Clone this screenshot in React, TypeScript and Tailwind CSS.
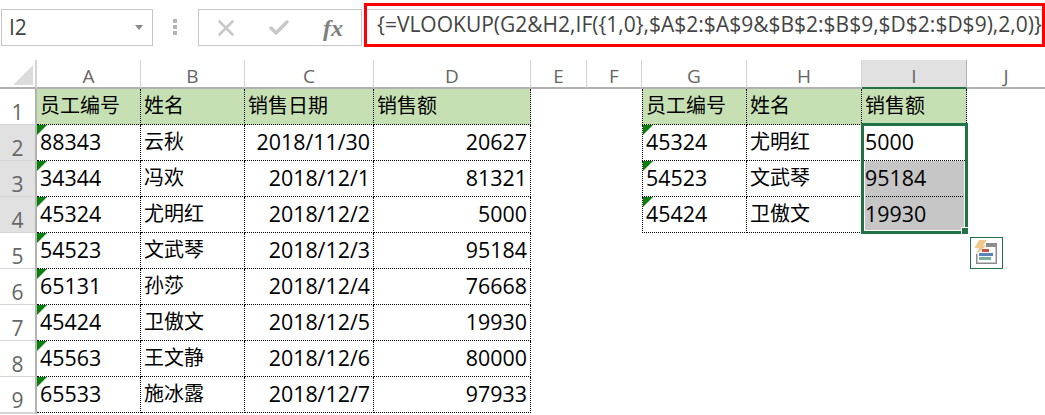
import { Check, X } from "lucide-react";

const font = "font-['Open_Sans','Noto_Sans_CJK_SC',sans-serif]";

const colLetters = ["A", "B", "C", "D", "E", "F", "G", "H", "I", "J"];

const leftRows = [
  ["88343", "云秋", "2018/11/30", "20627"],
  ["34344", "冯欢", "2018/12/1", "81321"],
  ["45324", "尤明红", "2018/12/2", "5000"],
  ["54523", "文武琴", "2018/12/3", "95184"],
  ["65131", "孙莎", "2018/12/4", "76668"],
  ["45424", "卫傲文", "2018/12/5", "19930"],
  ["45563", "王文静", "2018/12/6", "80000"],
  ["65533", "施冰露", "2018/12/7", "97933"],
];

const rightRows = [
  ["45324", "尤明红", "5000"],
  ["54523", "文武琴", "95184"],
  ["45424", "卫傲文", "19930"],
];

function ErrorMark() {
  return (
    <span className="absolute left-0 top-0 h-0 w-0 border-r-[10px] border-t-[10px] border-r-transparent border-t-[#0b7f0b]" />
  );
}

function TableCell({
  text,
  right,
  mark,
  header,
  first,
  gray,
  cjk,
}: {
  text: string;
  right?: boolean;
  mark?: boolean;
  header?: boolean;
  first?: boolean;
  gray?: boolean;
  cjk?: boolean;
}) {
  return (
    <div
      className={`relative flex items-center overflow-hidden whitespace-nowrap border-b border-r border-dotted border-black px-[3px] pb-[2px] leading-none text-black ${
        cjk ? "text-[20px]" : "text-[21.4px]"
      } ${right ? "justify-end" : "justify-start"} ${header ? "bg-[#c6e0b4]" : ""} ${
        first ? "border-l" : ""
      } ${gray ? "bg-[#c6c6c6]" : ""}`}
    >
      {mark && <ErrorMark />}
      <span>{text}</span>
    </div>
  );
}

function RowHead({ n }: { n?: number }) {
  const active = n !== undefined && n >= 2 && n <= 4;
  return (
    <div
      className={`flex items-end justify-center border-b border-r-2 border-b-[#d4d4d4] border-r-[#b1b1b1] text-[21px] leading-[24px] text-[#666666] ${
        active ? "bg-[#e1e1e1]" : ""
      }`}
    >
      {n}
    </div>
  );
}

function Empty() {
  return <div />;
}

export default function App() {
  return (
    <div className={`relative h-[415px] w-[1045px] overflow-hidden bg-white ${font}`}>
      {/* formula bar */}
      <div className="flex h-[60px] items-start bg-white">
        <div className="ml-px mt-[9px] flex h-[37px] w-[152px] items-center justify-between border border-[#c6c6c6] pl-[7px] pr-[9px] text-[21px] text-[#444444]">
          <span>I2</span>
          <span className="h-0 w-0 border-x-[4px] border-t-[5px] border-x-transparent border-t-[#8a8a8a]" />
        </div>
        <div className="ml-[20px] mt-[19px] flex flex-col gap-[2px]">
          <span className="h-[4px] w-[4px] bg-[#b4b4b4]" />
          <span className="h-[4px] w-[4px] bg-[#b4b4b4]" />
          <span className="h-[4px] w-[4px] bg-[#b4b4b4]" />
        </div>
        <div className="ml-[21px] mt-[9px] flex h-[37px] w-[164px] items-center border border-[#c6c6c6]">
          <X className="ml-[14px] h-[26px] w-[26px] text-[#c8c8c8]" strokeWidth={2.5} />
          <Check className="ml-[28px] h-[24px] w-[24px] text-[#c8c8c8]" strokeWidth={3.5} />
          <span className="ml-[32px] font-['Liberation_Serif',serif] text-[24px] font-bold italic leading-none text-[#808080]">
            fx
          </span>
        </div>
        <div className="ml-[2px] mt-[3px] h-[44px] w-[681px] border-[3px] border-[#ff0000] bg-white">
          <div className="mt-[3px] flex h-[31px] items-center whitespace-nowrap border-t border-[#d0d0d0] pb-[2px] pl-[10px] text-[21px] leading-none text-[#444444]">
            {"{=VLOOKUP(G2&H2,IF({1,0},$A$2:$A$9&$B$2:$B$9,$D$2:$D$9),2,0)}"}
          </div>
        </div>
      </div>

      {/* sheet */}
      <div className="grid grid-cols-[37px_104px_104px_129px_157px_56px_55px_105px_115px_105px_78px] grid-rows-[29px_repeat(8,36px)_36px]">
        <div className="relative border-b-2 border-r-2 border-[#b1b1b1] border-r-[#d4d4d4]">
          <span className="absolute bottom-[2px] right-[2px] h-0 w-0 border-b-[20px] border-l-[20px] border-b-[#dcdcdc] border-l-transparent" />
        </div>
        {colLetters.map((c) => (
          <div
            key={c}
            className={`flex items-end justify-center border-b-2 pb-px text-[19px] leading-[20px] text-[#666666] ${
              c === "I"
                ? "border-b-[#217346] border-r border-r-[#b1b1b1] bg-[#e1e1e1]"
                : c === "J"
                  ? "border-b-[#b1b1b1]"
                  : "border-b-[#b1b1b1] border-r border-r-[#d4d4d4]"
            }`}
          >
            {c}
          </div>
        ))}

        <RowHead n={1} />
        <TableCell text="员工编号" header cjk />
        <TableCell text="姓名" header cjk />
        <TableCell text="销售日期" header cjk />
        <TableCell text="销售额" header cjk />
        <Empty />
        <Empty />
        <TableCell text="员工编号" header first cjk />
        <TableCell text="姓名" header cjk />
        <TableCell text="销售额" header cjk />
        <Empty />

        {leftRows.map((row, i) => {
          const r = rightRows[i];
          return (
            <div key={row[0]} className="contents">
              <RowHead n={i + 2} />
              <TableCell text={row[0]} mark />
              <TableCell text={row[1]} cjk />
              <TableCell text={row[2]} right />
              <TableCell text={row[3]} right />
              <Empty />
              <Empty />
              {r ? (
                <>
                  <TableCell text={r[0]} mark first />
                  <TableCell text={r[1]} cjk />
                  <TableCell text={r[2]} gray={i > 0} />
                </>
              ) : (
                <>
                  <Empty />
                  <Empty />
                  <Empty />
                </>
              )}
              <Empty />
            </div>
          );
        })}
        <RowHead />
      </div>

      {/* selection over I2:I4 */}
      <div className="pointer-events-none absolute left-[861px] top-[123px] h-[111px] w-[107px] border-[3px] border-[#217346]">
        <div className="absolute inset-0 top-[35px] border-x border-b border-white" />
        <span className="absolute -bottom-[4px] -right-[4px] h-[8px] w-[8px] border border-white bg-[#217346]" />
      </div>

      {/* quick analysis button */}
      <div className="absolute left-[970px] top-[237px] h-[32px] w-[33px] border border-[#217346] bg-white">
        <svg width="31" height="30" viewBox="0 0 31 30" className="block">
          <path d="M5.75 16V25.25H25.25V8" fill="none" stroke="#8c8c8c" strokeWidth="1.5" />
          <rect x="15" y="5" width="11" height="4" fill="#8c8c8c" />
          <rect x="11" y="11" width="7" height="3" fill="#c9553f" />
          <rect x="8" y="15" width="14" height="3" fill="#5b84bd" />
          <rect x="8" y="19" width="12" height="3" fill="#76b29b" />
          <path d="M8 2H16L12 7.5H15.5L5 16.5L8 10H3.5Z" fill="#f0c88c" />
        </svg>
      </div>
    </div>
  );
}
